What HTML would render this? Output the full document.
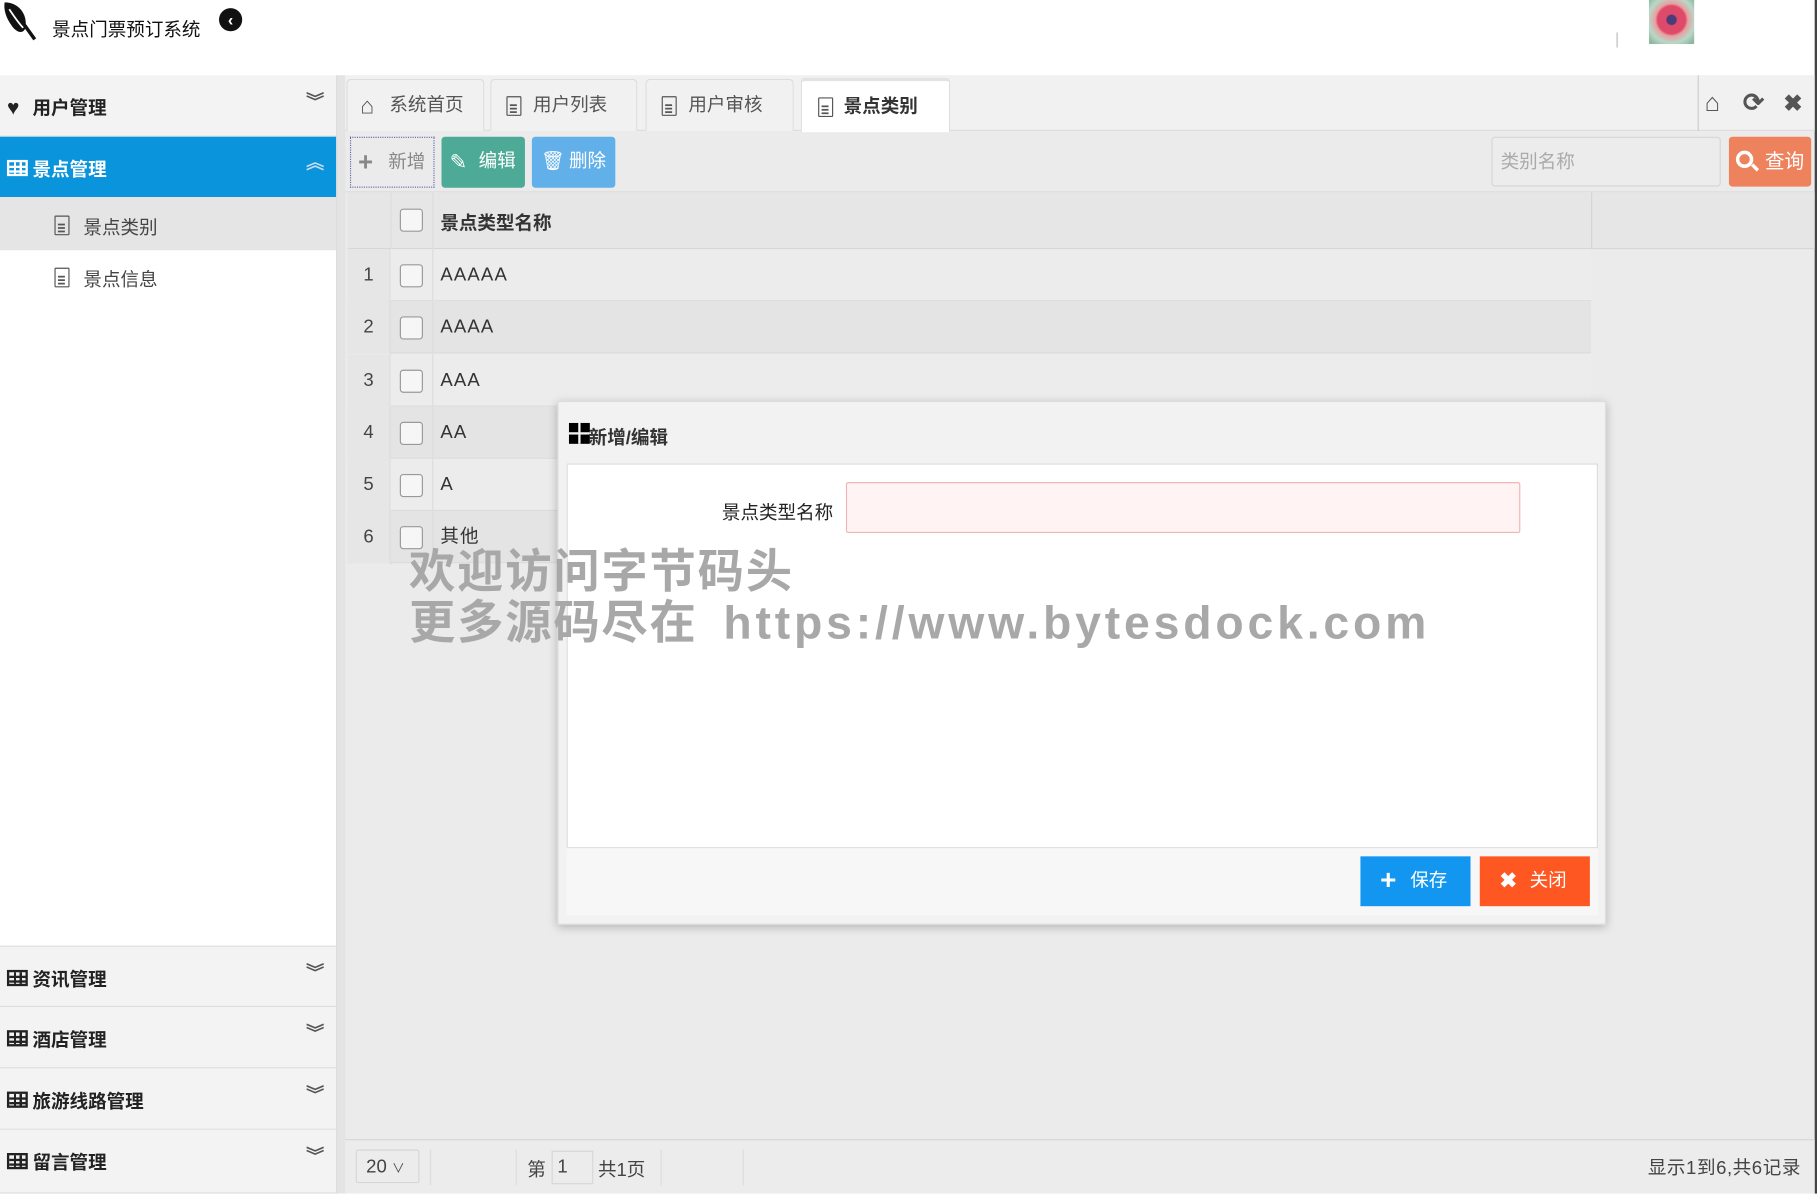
<!DOCTYPE html>
<html><head><meta charset="utf-8"><style>
*{box-sizing:border-box;margin:0;padding:0}
html,body{width:1817px;height:1193px;overflow:hidden;background:#fff}
#w{position:absolute;left:0;top:0;width:1568px;height:1030px;transform:scale(1.15880);transform-origin:0 0;font-family:"Liberation Sans","Noto Sans CJK SC",sans-serif;color:#333;font-size:15px;background:#ebebeb}
.a{position:absolute}
.side .it{position:absolute;left:0;width:290px;height:53px;background:#f3f3f3;border-bottom:1px solid #ddd;font-weight:bold;font-size:16px;line-height:60px;padding-left:28px;color:#222}
.grid{position:absolute;left:6px;top:20px;width:18px;height:14px;border:2px solid #222;background:linear-gradient(#222,#222) 0 3px/100% 2px no-repeat,linear-gradient(#222,#222) 0 7px/100% 2px no-repeat,linear-gradient(90deg,transparent 4px,#222 4px,#222 6px,transparent 6px,transparent 9px,#222 9px,#222 11px,transparent 11px)}
.chev{position:absolute;right:10px;top:-6px;font-size:16px;color:#555;font-weight:bold}
.tab{position:absolute;top:68px;height:45px;background:#f1f1f1;border:1px solid #ddd;border-bottom:none;border-radius:4px 4px 0 0;font-size:16px;line-height:46px;color:#555;padding-left:36px}
.doc{position:absolute;width:13px;height:17px;border:1.5px solid #555;border-radius:1px;background:linear-gradient(#555,#555) 2px 6px/6px 1.5px no-repeat,linear-gradient(#555,#555) 2px 9px/6px 1.5px no-repeat,linear-gradient(#555,#555) 2px 12px/6px 1.5px no-repeat}
.row{position:absolute;left:300px;width:1073px;height:45px;border-bottom:1px solid #dcdcdc;background:#ececec;font-size:16px;line-height:46px}
.row .n{position:absolute;left:0;width:37px;text-align:center;color:#444;border-right:1px solid #ddd;height:45px;background:#e6e6e6}
.row .c{position:absolute;left:45px;top:13px;width:20px;height:20px;border:1.5px solid #999;border-radius:3px;background:#f6f6f6}
.row .t{position:absolute;left:80px;color:#333;letter-spacing:1px}
.row .s{position:absolute;left:73px;top:0;height:45px;border-left:1px solid #ddd}
</style></head><body><div id="w">
<div class="a" style="left:0;top:0;width:1568px;height:65px;background:#fff"></div>
<svg class="a" style="left:2px;top:0" width="34" height="36" viewBox="0 0 34 36"><path d="M2 2 C14 2 22 12 20 24 C18 30 12 28 8 22 C3 15 1 8 2 2Z" fill="#111"/><path d="M8 6 L28 34" stroke="#111" stroke-width="3"/><path d="M6 8 C10 14 14 20 18 24" stroke="#fff" stroke-width="1.5" fill="none"/></svg>
<div class="a" style="left:45px;top:12px;font-size:16px;color:#111">景点门票预订系统</div>
<div class="a" style="left:189px;top:7px;width:20px;height:20px;border-radius:50%;background:#111;color:#fff;font-size:14px;line-height:20px;text-align:center;font-weight:bold">&lsaquo;</div>
<div class="a" style="left:1395px;top:28px;width:1px;height:13px;background:#bbb"></div>
<div class="a" style="left:1423px;top:0;width:39px;height:38px;background:radial-gradient(circle at 50% 45%,#4a3c7a 0 4px,#e04a6a 5px 12px,#e7a0a0 14px,#b8d8c8 20px,#8fb8a0 26px)"></div>
<div class="a" style="left:1566px;top:0;width:2px;height:1030px;background:#444"></div>
<div class="side">
<div class="a" style="left:0;top:65px;width:290px;height:965px;background:#fff"></div>
<div class="a" style="left:290px;top:65px;width:8px;height:965px;background:#e4e4e4;border-left:1px solid #ddd"></div>
<div class="it" style="top:65px"><span style="position:absolute;left:6px;top:-2px;font-size:18px">♥</span>用户管理<span class="chev">︾</span></div>
<div class="it" style="top:118px;height:52px;background:#0a94dc;color:#fff;border:none"><span class="grid" style="border-color:#fff;background:linear-gradient(#fff,#fff) 0 3px/100% 2px no-repeat,linear-gradient(#fff,#fff) 0 7px/100% 2px no-repeat,linear-gradient(90deg,transparent 4px,#fff 4px,#fff 6px,transparent 6px,transparent 9px,#fff 9px,#fff 11px,transparent 11px)"></span>景点管理<span class="chev" style="color:#cde">︽</span></div>
<div class="a" style="left:0;top:170px;width:290px;height:46px;background:#e5e5e5"></div>
<span class="doc" style="left:47px;top:186px"></span><div class="a" style="left:72px;top:183px;font-size:16px;color:#444">景点类别</div>
<span class="doc" style="left:47px;top:231px"></span><div class="a" style="left:72px;top:228px;font-size:16px;color:#444">景点信息</div>
<div class="it" style="top:816px;border-top:1px solid #ddd"><span class="grid"></span>资讯管理<span class="chev">︾</span></div>
<div class="it" style="top:869px"><span class="grid"></span>酒店管理<span class="chev">︾</span></div>
<div class="it" style="top:922px"><span class="grid"></span>旅游线路管理<span class="chev">︾</span></div>
<div class="it" style="top:975px;height:55px"><span class="grid"></span>留言管理<span class="chev">︾</span></div>
</div>
<div class="a" style="left:298px;top:65px;width:1268px;height:48px;background:#f1f1f1;border-bottom:1px solid #ddd"></div>
<div class="tab" style="left:299px;width:119px"><span style="position:absolute;left:11px;top:0;font-size:20px;color:#555;font-weight:bold">⌂</span>系统首页</div>
<div class="tab" style="left:423px;width:127px"><span class="doc" style="left:13px;top:14px"></span>用户列表</div>
<div class="tab" style="left:557px;width:128px"><span class="doc" style="left:13px;top:14px"></span>用户审核</div>
<div class="tab" style="left:691px;width:129px;top:67px;height:47px;background:#fff;border-top:3px solid #e3e3e3;font-weight:bold;color:#333"><span class="doc" style="left:14px;top:14px"></span>景点类别</div>
<div class="a" style="left:1465px;top:65px;width:1px;height:48px;background:#ccc"></div>
<div class="a" style="left:1471px;top:76px;font-size:22px;color:#555;font-weight:bold">⌂</div>
<div class="a" style="left:1504px;top:76px;font-size:22px;color:#555;font-weight:bold">⟳</div>
<div class="a" style="left:1539px;top:77px;font-size:20px;color:#555;font-weight:bold">✖</div>
<div class="a" style="left:302px;top:118px;width:73px;height:44px;border:1px dotted #66a;color:#888;font-size:16px;line-height:44px;padding-left:32px"><span style="position:absolute;left:6px;top:-1px;font-size:22px;font-weight:bold;color:#888">+</span>新增</div>
<div class="a" style="left:381px;top:118px;width:72px;height:44px;background:#4daa96;border-radius:3px;color:#fff;font-size:16px;line-height:44px;padding-left:32px"><span style="position:absolute;left:7px;top:0;font-size:18px">✎</span>编辑</div>
<div class="a" style="left:459px;top:118px;width:72px;height:44px;background:#62b0ea;border-radius:3px;color:#fff;font-size:16px;line-height:44px;padding-left:32px"><span style="position:absolute;left:8px;top:0;font-size:16px">🗑</span>删除</div>
<div class="a" style="left:1287px;top:118px;width:198px;height:43px;border:1px solid #d6d6d6;border-radius:3px;background:#ececec;color:#aaa;font-size:16px;line-height:43px;padding-left:7px">类别名称</div>
<div class="a" style="left:1492px;top:118px;width:71px;height:43px;background:#ee825d;border-radius:3px;color:#fff;font-size:17px;line-height:43px;padding-left:31px"><span style="position:absolute;left:6px;top:12px;width:15px;height:15px;border:3px solid #fff;border-radius:50%"></span><span style="position:absolute;left:19px;top:25px;width:7px;height:3px;background:#fff;transform:rotate(45deg)"></span>查询</div>
<div class="a" style="left:298px;top:165px;width:1268px;height:1px;background:#ddd"></div>
<div class="a" style="left:300px;top:166px;width:1266px;height:49px;background:#e6e6e6;border-bottom:1px solid #d6d6d6"></div>
<div class="a" style="left:337px;top:166px;width:1px;height:321px;background:#ddd"></div>
<div class="a" style="left:373px;top:166px;width:1px;height:321px;background:#ddd"></div>
<div class="a" style="left:1373px;top:166px;width:1px;height:49px;background:#d6d6d6"></div>
<div class="a" style="left:345px;top:180px;width:20px;height:20px;border:1.5px solid #999;border-radius:3px;background:#f6f6f6"></div>
<div class="a" style="left:380px;top:179px;font-size:16px;font-weight:bold;color:#333">景点类型名称</div>
<div class="row" style="top:215px"><span class="n">1</span><span class="c"></span><span class="s"></span><span class="t">AAAAA</span></div>
<div class="row" style="top:260px;background:#e4e4e4"><span class="n">2</span><span class="c"></span><span class="s"></span><span class="t">AAAA</span></div>
<div class="row" style="top:306px"><span class="n">3</span><span class="c"></span><span class="s"></span><span class="t">AAA</span></div>
<div class="row" style="top:351px;background:#e4e4e4"><span class="n">4</span><span class="c"></span><span class="s"></span><span class="t">AA</span></div>
<div class="row" style="top:396px"><span class="n">5</span><span class="c"></span><span class="s"></span><span class="t">A</span></div>
<div class="row" style="top:441px;background:#e4e4e4"><span class="n">6</span><span class="c"></span><span class="s"></span><span class="t">其他</span></div>
<div class="a" style="left:298px;top:983px;width:1268px;height:47px;background:#ececec;border-top:1px solid #d6d6d6"></div>
<div class="a" style="left:307px;top:992px;width:55px;height:29px;border:1px solid #d6d6d6;border-radius:2px;font-size:16px;line-height:29px;padding-left:8px;color:#444">20 <span style="font-size:11px">∨</span></div>
<div class="a" style="left:371px;top:992px;width:1px;height:31px;background:#ddd"></div>
<div class="a" style="left:445px;top:992px;width:1px;height:31px;background:#ddd"></div>
<div class="a" style="left:455px;top:996px;font-size:16px;color:#444">第</div>
<div class="a" style="left:476px;top:993px;width:36px;height:29px;border:1px solid #d6d6d6;font-size:16px;line-height:27px;padding-left:4px;color:#444">1</div>
<div class="a" style="left:516px;top:996px;font-size:16px;color:#444">共1页</div>
<div class="a" style="left:570px;top:992px;width:1px;height:31px;background:#ddd"></div>
<div class="a" style="left:641px;top:992px;width:1px;height:31px;background:#ddd"></div>
<div class="a" style="left:1422px;top:994px;font-size:16px;color:#444;letter-spacing:0.5px">显示1到6,共6记录</div>
<div class="a" style="left:481px;top:346px;width:905px;height:452px;background:#f2f2f2;border:1px solid #ddd;box-shadow:0 2px 8px rgba(0,0,0,.25)"></div>
<div class="a" style="left:491px;top:365px;width:18px;height:18px;background:#000"><div style="position:absolute;left:0;top:8px;width:18px;height:2px;background:#f2f2f2"></div><div style="position:absolute;left:8px;top:0;width:2px;height:18px;background:#f2f2f2"></div></div>
<div class="a" style="left:508px;top:364px;font-size:16px;font-weight:bold;color:#333">新增/编辑</div>
<div class="a" style="left:489px;top:400px;width:890px;height:332px;background:#fff;border:1px solid #ddd"></div>
<div class="a" style="left:623px;top:429px;font-size:16px;color:#222">景点类型名称</div>
<div class="a" style="left:730px;top:416px;width:582px;height:44px;background:#fff3f3;border:1px solid #f0b5b5;border-radius:2px"></div>
<div class="a" style="left:489px;top:732px;width:890px;height:58px;background:#f7f7f7"></div>
<div class="a" style="left:1174px;top:739px;width:95px;height:43px;background:#1296f0;color:#fff;font-size:16px;line-height:43px;padding-left:43px"><span style="position:absolute;left:17px;top:-1px;font-size:24px;font-weight:bold">+</span>保存</div>
<div class="a" style="left:1277px;top:739px;width:95px;height:43px;background:#ff5722;color:#fff;font-size:16px;line-height:43px;padding-left:43px"><span style="position:absolute;left:17px;top:0;font-size:18px;font-weight:bold">✖</span>关闭</div>
<div class="a" style="left:353px;top:472px;font-size:40px;font-weight:bold;color:#a8a8a8;line-height:44px;white-space:pre"><span style="letter-spacing:1.5px">欢迎访问字节码头</span>
<span style="letter-spacing:1.5px">更多源码尽在</span>  <span style="letter-spacing:3.3px">https://www.bytesdock.com</span></div>
</div></body></html>
